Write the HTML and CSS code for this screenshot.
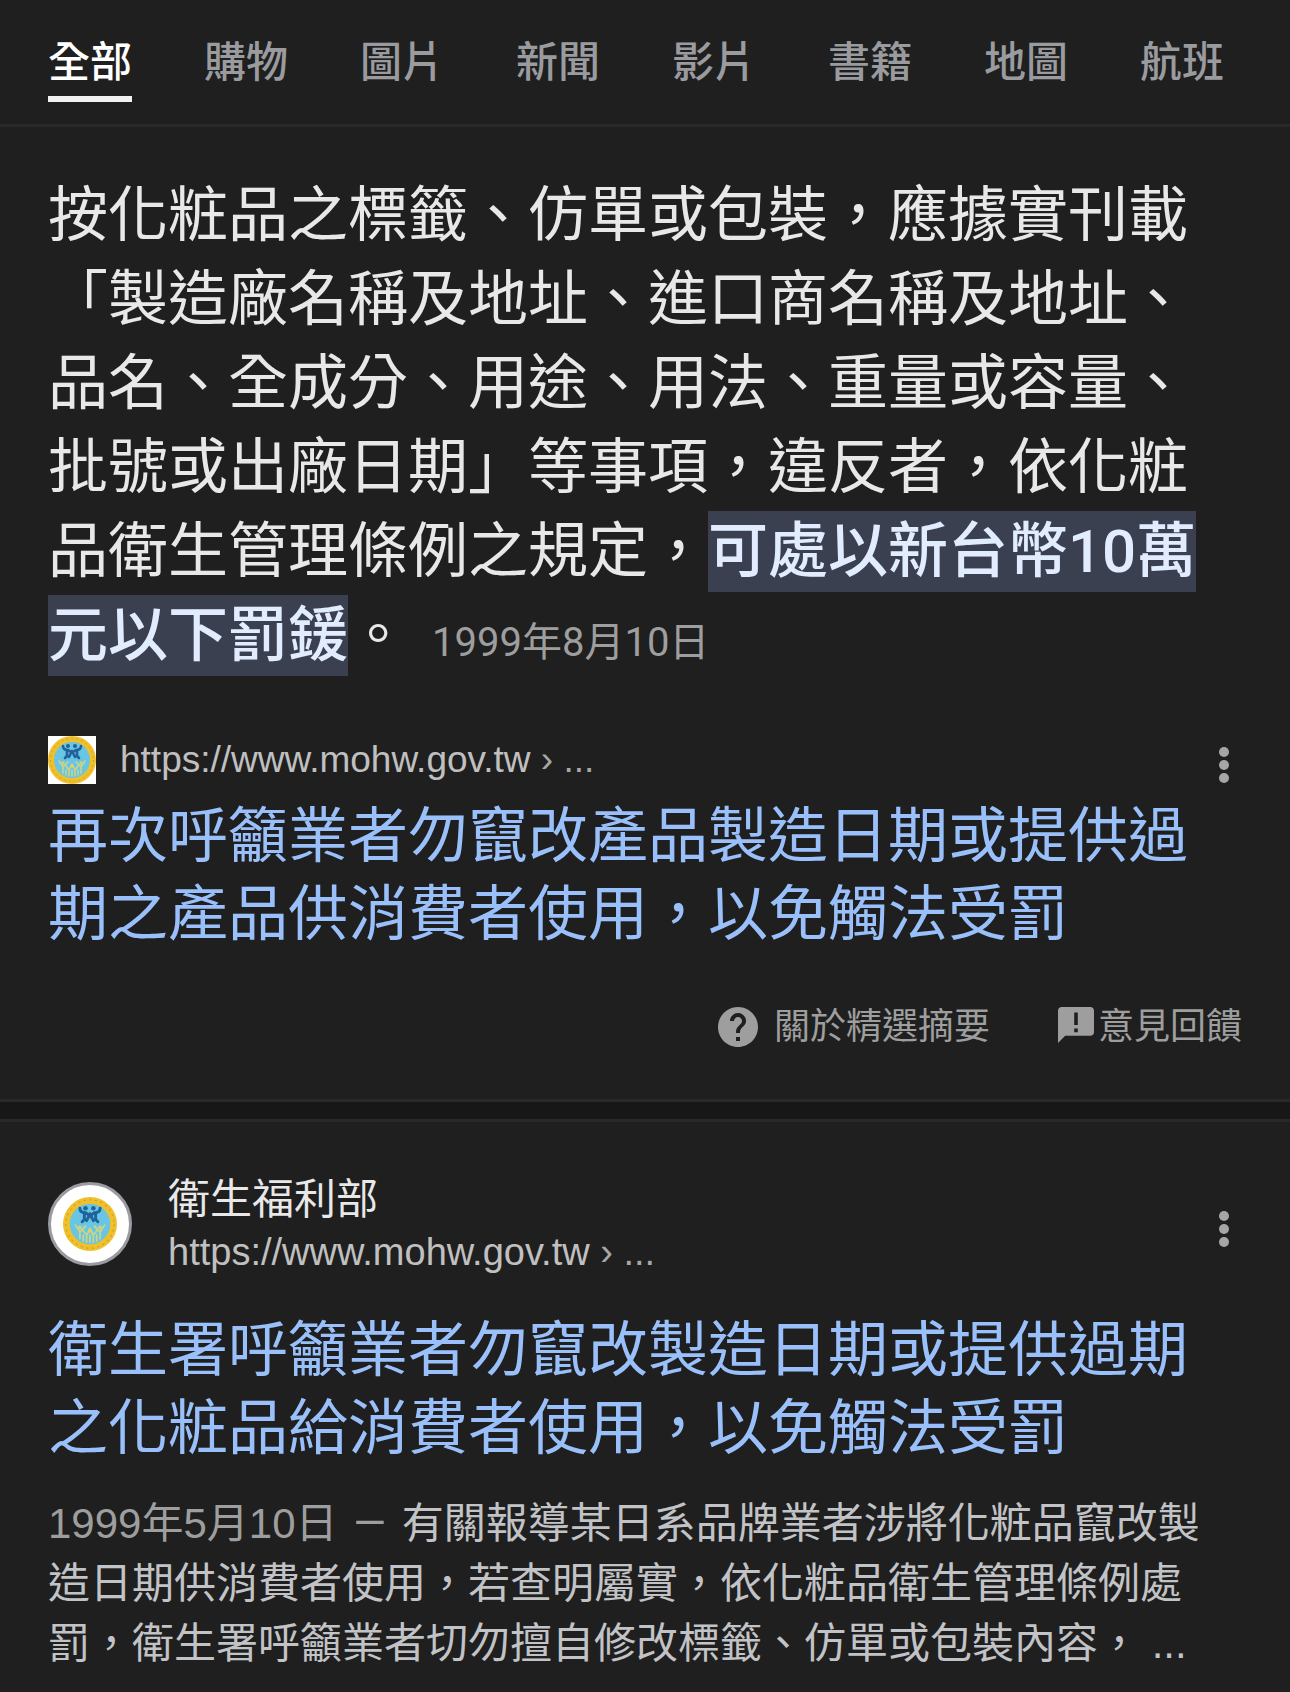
FILE: index.html
```html
<!DOCTYPE html>
<html lang="zh-Hant-TW">
<head>
    <meta charset="UTF-8">
    <meta name="viewport" content="width=device-width, initial-scale=1.0">
    <title>搜尋結果</title>
    <link rel="stylesheet" href="styles.css">
</head>
<body>
    <!-- Shared site emblem -->
    <svg class="sprite" aria-hidden="true">
        <symbol id="emblem" viewBox="0 0 48 48">
            <circle cx="24" cy="24" r="24" fill="#efc02c"/>
            <circle cx="24" cy="24" r="21.5" fill="none" stroke="#c9a234" stroke-width="1" stroke-dasharray="2 3"/>
            <circle cx="24" cy="24" r="18" fill="#68c5e4"/>
            <g fill="none" stroke="#20639a" stroke-width="2.6" stroke-linecap="round">
                <path d="M15 10q0 4 5 4l3 2M33 10q0 4-5 4l-3 2"/>
                <path d="M19 15v5l-2 2M29 15v5l2 2M24 15l-3 6M24 15l3 6"/>
            </g>
            <g fill="#20639a">
                <circle cx="20" cy="10" r="2"/>
                <circle cx="27" cy="10" r="2"/>
            </g>
            <g fill="none" stroke="#c9d58a" stroke-width="1.6" stroke-linecap="round">
                <path d="M11 25l4 6v6M20 26l-5 5M18 30l3 4v6M24 28l-3 6M24 28l3 6v6M30 30l-3 4M28 26l5 5v6M37 25l-4 6M24 34v6M18 34v5M30 34v5"/>
            </g>
            <g fill="#d8d070">
                <circle cx="15" cy="27" r="1.7"/>
                <circle cx="24" cy="30" r="1.7"/>
                <circle cx="33" cy="27" r="1.7"/>
            </g>
        </symbol>
    </svg>

    <nav class="tabs">
        <a class="tab active" href="#" aria-current="page">全部</a>
        <a class="tab" href="#">購物</a>
        <a class="tab" href="#">圖片</a>
        <a class="tab" href="#">新聞</a>
        <a class="tab" href="#">影片</a>
        <a class="tab" href="#">書籍</a>
        <a class="tab" href="#">地圖</a>
        <a class="tab" href="#">航班</a>
    </nav>

    <main>
        <section class="featured">
            <p class="answer">按化粧品之標籤、仿單或包裝，應據實刊載「製造廠名稱及地址、進口商名稱及地址、品名、全成分、用途、用法、重量或容量、批號或出廠日期」等事項，違反者，依化粧品衛生管理條例之規定，<mark>可處以新台幣10萬元以下罰鍰</mark>。<span class="answer-date">1999年8月10日</span></p>

            <div class="source">
                <svg class="favicon"><use href="#emblem"/></svg>
                <cite class="url">https://www.mohw.gov.tw <span class="crumb">› ...</span></cite>
                <button class="menu" type="button" aria-label="更多選項">
                    <svg viewBox="0 0 12 38"><circle cx="6" cy="6" r="5"/><circle cx="6" cy="19" r="5"/><circle cx="6" cy="32" r="5"/></svg>
                </button>
            </div>
            <h3 class="title"><a href="#">再次呼籲業者勿竄改產品製造日期或提供過期之產品供消費者使用，以免觸法受罰</a></h3>

            <div class="actions">
                <a class="about" href="#">
                    <svg class="help-icon" viewBox="2 2 20 20"><path d="M12 2C6.48 2 2 6.48 2 12s4.480 10 10 10 10-4.480 10-10S17.520 2 12 2zm1 17h-2v-2h2v2zm2.070-7.750l-.9.920C13.450 12.900 13 13.500 13 15h-2v-.5c0-1.100.45-2.100 1.170-2.830l1.240-1.260c.37-.36.59-.86.59-1.410 0-1.100-.9-2-2-2s-2 .9-2 2H8c0-2.210 1.790-4 4-4s4 1.790 4 4c0 .88-.36 1.680-.93 2.250z"/></svg>
                    關於精選摘要
                </a>
                <button class="feedback" type="button">
                    <svg class="feedback-icon" viewBox="2 2 20 20"><path d="M20 2H4c-1.100 0-2 .9-2 2v18l4-4h14c1.100 0 2-.9 2-2V4c0-1.100-.9-2-2-2zm-7 14h-2v-2h2v2zm0-4h-2V5h2v7z"/></svg>
                    意見回饋
                </button>
            </div>
        </section>

        <section class="result">
            <div class="site">
                <span class="site-icon"><svg><use href="#emblem"/></svg></span>
                <div class="site-text">
                    <div class="site-name">衛生福利部</div>
                    <cite class="url">https://www.mohw.gov.tw <span class="crumb">› ...</span></cite>
                </div>
                <button class="menu" type="button" aria-label="更多選項">
                    <svg viewBox="0 0 12 38"><circle cx="6" cy="6" r="5"/><circle cx="6" cy="19" r="5"/><circle cx="6" cy="32" r="5"/></svg>
                </button>
            </div>
            <h3 class="title"><a href="#">衛生署呼籲業者勿竄改製造日期或提供過期之化粧品給消費者使用，以免觸法受罰</a></h3>
            <p class="snippet"><span class="date">1999年5月10日 <span class="dash">—</span> </span>有關報導某日系品牌業者涉將化粧品竄改製造日期供消費者使用，若查明屬實，依化粧品衛生管理條例處罰，衛生署呼籲業者切勿擅自修改標籤、仿單或包裝內容， ...</p>
        </section>
    </main>
</body>
</html>
```

FILE: styles.css
```css
* { box-sizing: border-box; }
body {
    margin: 0;
    background-color: #1f1f1f;
    color: #e8e8e8;
    font-family: "Liberation Sans", "Noto Sans CJK TC", sans-serif;
    text-spacing-trim: space-all;
}
h3, p { margin: 0; font-weight: 400; }
a { color: inherit; text-decoration: none; }
button { padding: 0; border: 0; background: none; color: inherit; font: inherit; }
svg { display: block; fill: currentColor; }
cite { font-style: normal; }
.sprite { position: absolute; width: 0; height: 0; }

/* Tabs */
.tabs {
    display: flex;
    gap: 72px;
    padding: 33px 48px 22px;
    border-bottom: 3px solid #29292a;
    overflow: hidden;
    white-space: nowrap;
}
.tab {
    padding-bottom: 3px;
    border-bottom: 6px solid transparent;
    color: #9a9b9f;
    font-size: 42px;
    font-weight: 500;
    line-height: 60px;
}
.tab.active { color: #fff; border-color: #f1f1f1; }

/* Featured snippet */
.featured { padding: 47px 48px 52px; border-bottom: 3px solid #29292a; }
.answer {
    font-family: Roboto, "Noto Sans CJK TC", sans-serif;
    font-size: 60px;
    line-height: 84px;
}
mark { padding: 5px 0; background-color: #3a404f; color: #e2ecff; font-weight: 500; }
.answer-date { margin-left: 24px; color: #9e9e9e; font-size: 40px; line-height: 40px; }

.source { display: flex; align-items: center; height: 48px; margin-top: 58px; }
.favicon { width: 48px; height: 48px; margin-right: 24px; background-color: #fff; }
.url { color: #c0c0c0; font-size: 37px; line-height: 48px; }
.crumb { color: #a8a8a8; }
.menu { margin: 10px 12px 0 auto; color: #a6a6a6; }
.menu svg { width: 12px; height: 38px; }

.title { color: #99c0fa; font-size: 60px; line-height: 78px; }
.featured .title { margin-top: 14px; }

.actions {
    display: flex;
    justify-content: flex-end;
    gap: 68px;
    margin-top: 53px;
    color: #9e9e9e;
    font-size: 36px;
    line-height: 40px;
}
.about, .feedback { display: flex; align-items: center; }
.help-icon { width: 40px; height: 40px; margin-right: 16px; }
.feedback-icon { width: 36px; height: 36px; margin-right: 4px; align-self: flex-start; }

/* Result */
.result { margin-top: 17px; padding: 60px 48px 18px; border-top: 3px solid #29292a; }
.featured + .result { box-shadow: 0 -17px #171717; }
.site { display: flex; align-items: center; height: 84px; }
.site-icon {
    display: flex;
    align-items: center;
    justify-content: center;
    width: 84px;
    height: 84px;
    margin-right: 36px;
    border: 3px solid #9a9aa0;
    border-radius: 50%;
    background-color: #fff;
}
.site-icon svg { width: 54px; height: 54px; }
.site-name { font-size: 42px; line-height: 56px; }
.site .url { font-size: 38px; }
.result .title { margin-top: 46px; }
.snippet { margin-top: 26px; padding-right: 12px; color: #c2c3c6; font-size: 42px; line-height: 60px; }
.date { color: #9e9e9e; }
.dash { margin: 0 4px; font-family: Roboto, sans-serif; }
```
